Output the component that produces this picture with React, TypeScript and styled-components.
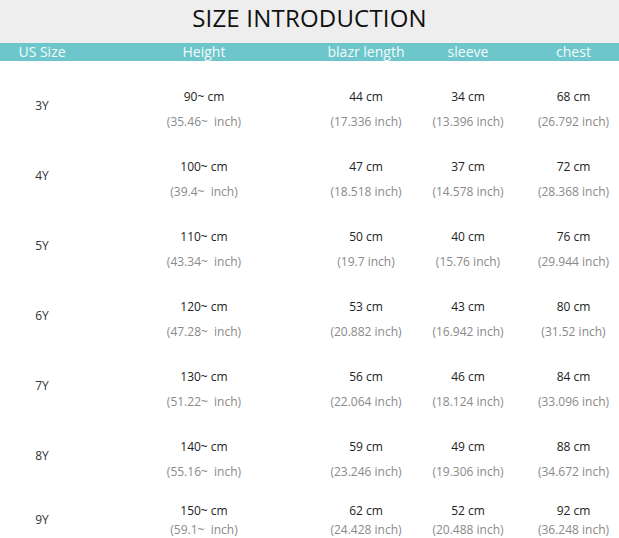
import styled, { createGlobalStyle } from 'styled-components';

const GlobalStyle = createGlobalStyle`
  body {
    margin: 0;
    background: #ffffff;
    font-family: 'Open Sans', 'Noto Sans', Arial, sans-serif;
    overflow: hidden;
  }
`;

interface SizeRow {
  size: string;
  height: string;
  heightInch: string;
  length: string;
  lengthInch: string;
  sleeve: string;
  sleeveInch: string;
  chest: string;
  chestInch: string;
}

const rows: SizeRow[] = [
  { size: '3Y', height: '90~ cm', heightInch: '(35.46~\u00a0 inch)', length: '44 cm', lengthInch: '(17.336 inch)', sleeve: '34 cm', sleeveInch: '(13.396 inch)', chest: '68 cm', chestInch: '(26.792 inch)' },
  { size: '4Y', height: '100~ cm', heightInch: '(39.4~\u00a0 inch)', length: '47 cm', lengthInch: '(18.518 inch)', sleeve: '37 cm', sleeveInch: '(14.578 inch)', chest: '72 cm', chestInch: '(28.368 inch)' },
  { size: '5Y', height: '110~ cm', heightInch: '(43.34~\u00a0 inch)', length: '50 cm', lengthInch: '(19.7 inch)', sleeve: '40 cm', sleeveInch: '(15.76 inch)', chest: '76 cm', chestInch: '(29.944 inch)' },
  { size: '6Y', height: '120~ cm', heightInch: '(47.28~\u00a0 inch)', length: '53 cm', lengthInch: '(20.882 inch)', sleeve: '43 cm', sleeveInch: '(16.942 inch)', chest: '80 cm', chestInch: '(31.52 inch)' },
  { size: '7Y', height: '130~ cm', heightInch: '(51.22~\u00a0 inch)', length: '56 cm', lengthInch: '(22.064 inch)', sleeve: '46 cm', sleeveInch: '(18.124 inch)', chest: '84 cm', chestInch: '(33.096 inch)' },
  { size: '8Y', height: '140~ cm', heightInch: '(55.16~\u00a0 inch)', length: '59 cm', lengthInch: '(23.246 inch)', sleeve: '49 cm', sleeveInch: '(19.306 inch)', chest: '88 cm', chestInch: '(34.672 inch)' },
  { size: '9Y', height: '150~ cm', heightInch: '(59.1~\u00a0 inch)', length: '62 cm', lengthInch: '(24.428 inch)', sleeve: '52 cm', sleeveInch: '(20.488 inch)', chest: '92 cm', chestInch: '(36.248 inch)' },
];

const headers = ['US Size', 'Height', 'blazr length', 'sleeve', 'chest'];

export default function App() {
  return (
    <>
      <GlobalStyle />
      <Page>
        <TitleBar>SIZE INTRODUCTION</TitleBar>
        <HeaderRow>
          {headers.map((h) => (
            <HeaderCell key={h}>{h}</HeaderCell>
          ))}
        </HeaderRow>
        {rows.map((r, i) => {
          const compact = i === rows.length - 1;
          return (
            <Row key={r.size} $compact={compact}>
              <SizeCell $compact={compact}>{r.size}</SizeCell>
              <Cell $compact={compact}>
                <Cm>{r.height}</Cm>
                <Inch>{r.heightInch}</Inch>
              </Cell>
              <Cell $compact={compact}>
                <Cm>{r.length}</Cm>
                <Inch>{r.lengthInch}</Inch>
              </Cell>
              <Cell $compact={compact}>
                <Cm>{r.sleeve}</Cm>
                <Inch>{r.sleeveInch}</Inch>
              </Cell>
              <Cell $compact={compact}>
                <Cm>{r.chest}</Cm>
                <Inch>{r.chestInch}</Inch>
              </Cell>
            </Row>
          );
        })}
      </Page>
    </>
  );
}

const columns = '84px 240px 84px 120px 91px';

const Page = styled.div`
  width: 619px;
  height: 538px;
  overflow: hidden;
`;

const TitleBar = styled.div`
  height: 43px;
  background: #eeeeee;
  color: #111111;
  font-size: 24px;
  line-height: 36px;
  text-align: center;
  letter-spacing: 0.2px;
`;

const HeaderRow = styled.div`
  display: grid;
  grid-template-columns: ${columns};
  height: 18px;
  background: #6cc6cb;
`;

const HeaderCell = styled.div`
  color: #f4fbfb;
  font-size: 14px;
  line-height: 18px;
  text-align: center;
  white-space: nowrap;
`;

const Row = styled.div<{ $compact?: boolean }>`
  display: grid;
  grid-template-columns: ${columns};
  height: ${({ $compact }) => ($compact ? '57px' : '70px')};
`;

const SizeCell = styled.div<{ $compact?: boolean }>`
  padding-top: ${({ $compact }) => ($compact ? '30px' : '36px')};
  font-size: 12px;
  line-height: 18px;
  color: #333333;
  text-align: center;
`;

const Cell = styled.div<{ $compact?: boolean }>`
  display: flex;
  flex-direction: column;
  align-items: center;
  padding-top: ${({ $compact }) => ($compact ? '20px' : '23px')};
  font-size: 12px;
  line-height: ${({ $compact }) => ($compact ? '19px' : '25px')};
  white-space: nowrap;
`;

const Cm = styled.span`
  color: #222222;
`;

const Inch = styled.span`
  color: #8a8a8a;
`;
